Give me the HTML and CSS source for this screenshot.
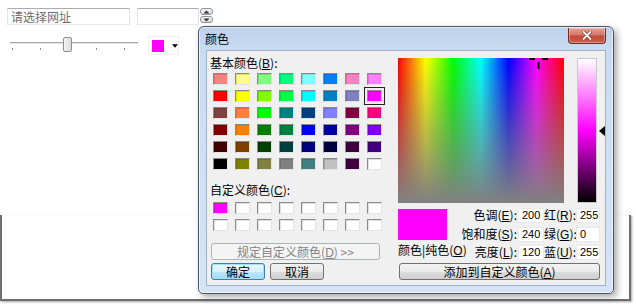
FILE: index.html
```html
<!DOCTYPE html>
<html>
<head>
<meta charset="utf-8">
<link rel="stylesheet" href="styles.css">
</head>
<body>
<div class="page">
  <div class="row1">
    <div class="textbox url">请选择网址</div>
    <div class="textbox num"></div>
    <div class="spin">
      <span><svg width="7" height="4" viewBox="0 0 7 4"><path d="M0.5 3.5 L3.5 0.5 L6.5 3.5Z" fill="#333"/></svg></span>
      <span><svg width="7" height="4" viewBox="0 0 7 4"><path d="M0.5 0.5 L3.5 3.5 L6.5 0.5Z" fill="#333"/></svg></span>
    </div>
  </div>
  <div class="row2">
    <div class="slider">
      <div class="track"></div>
      <div class="ticks"><i></i><i></i><i></i><i></i><i></i></div>
      <div class="thumb"></div>
    </div>
    <div class="colorbtn">
      <span class="cswatch"></span>
      <svg class="carrow" width="7" height="4" viewBox="0 0 7 4"><path d="M0 0 L7 0 L3.5 4Z" fill="#000"/></svg>
    </div>
  </div>
</div>

<div class="bgwin"></div>

<div class="dialog">
  <div class="titlebar">
    <span class="title">颜色</span>
    <div class="close">
      <svg width="10" height="9" viewBox="0 0 10 9"><path d="M1.5 1 L8.5 8 M8.5 1 L1.5 8" stroke="#7a2418" stroke-width="3" stroke-linecap="round"/><path d="M1.5 1 L8.5 8 M8.5 1 L1.5 8" stroke="#fff" stroke-width="1.8" stroke-linecap="round"/></svg>
    </div>
  </div>
  <div class="client">
    <div class="leftcol">
      <div class="lbl">基本颜色(<u>B</u>):</div>
      <div class="swgrid">
        <span class="sw" style="background:#ff8080"></span><span class="sw" style="background:#ffff80"></span><span class="sw" style="background:#80ff80"></span><span class="sw" style="background:#00ff80"></span><span class="sw" style="background:#80ffff"></span><span class="sw" style="background:#0080ff"></span><span class="sw" style="background:#ff80c0"></span><span class="sw" style="background:#ff80ff"></span>
        <span class="sw" style="background:#ff0000"></span><span class="sw" style="background:#ffff00"></span><span class="sw" style="background:#80ff00"></span><span class="sw" style="background:#00ff40"></span><span class="sw" style="background:#00ffff"></span><span class="sw" style="background:#0080c0"></span><span class="sw" style="background:#8080c0"></span><span class="sw selected" style="background:#ff00ff"></span>
        <span class="sw" style="background:#804040"></span><span class="sw" style="background:#ff8040"></span><span class="sw" style="background:#00ff00"></span><span class="sw" style="background:#008080"></span><span class="sw" style="background:#004080"></span><span class="sw" style="background:#8080ff"></span><span class="sw" style="background:#800040"></span><span class="sw" style="background:#ff0080"></span>
        <span class="sw" style="background:#800000"></span><span class="sw" style="background:#ff8000"></span><span class="sw" style="background:#008000"></span><span class="sw" style="background:#008040"></span><span class="sw" style="background:#0000ff"></span><span class="sw" style="background:#0000a0"></span><span class="sw" style="background:#800080"></span><span class="sw" style="background:#8000ff"></span>
        <span class="sw" style="background:#400000"></span><span class="sw" style="background:#804000"></span><span class="sw" style="background:#004000"></span><span class="sw" style="background:#004040"></span><span class="sw" style="background:#000080"></span><span class="sw" style="background:#000040"></span><span class="sw" style="background:#400040"></span><span class="sw" style="background:#400080"></span>
        <span class="sw" style="background:#000000"></span><span class="sw" style="background:#808000"></span><span class="sw" style="background:#808040"></span><span class="sw" style="background:#808080"></span><span class="sw" style="background:#408080"></span><span class="sw" style="background:#c0c0c0"></span><span class="sw" style="background:#400040"></span><span class="sw" style="background:#ffffff"></span>
      </div>
      <div class="lbl custom-lbl">自定义颜色(<u>C</u>):</div>
      <div class="swgrid custom">
        <span class="sw" style="background:#ff00ff"></span><span class="sw"></span><span class="sw"></span><span class="sw"></span><span class="sw"></span><span class="sw"></span><span class="sw"></span><span class="sw"></span>
        <span class="sw"></span><span class="sw"></span><span class="sw"></span><span class="sw"></span><span class="sw"></span><span class="sw"></span><span class="sw"></span><span class="sw"></span>
      </div>
      <div class="btn disabled wide">规定自定义颜色(<u>D</u>) &gt;&gt;</div>
      <div class="btnrow">
        <div class="btn default">确定</div>
        <div class="btn">取消</div>
      </div>
    </div>
    <div class="rightcol">
      <div class="pickrow">
        <div class="spectrum">
          <svg class="cross" width="21" height="21" viewBox="0 0 21 21"><path d="M1 10 H7 M14 10 H20 M10.5 1 V7 M10.5 13 V20" stroke="#000" stroke-width="2"/></svg>
        </div>
        <div class="lum"></div>
        <svg class="lumarrow" width="6" height="10" viewBox="0 0 6 10"><path d="M6 0 L0 5 L6 10Z" fill="#000"/></svg>
      </div>
      <div class="values">
        <div class="preview"></div>
        <div class="solid">颜色|纯色(<u>O</u>)</div>
        <div class="vl r1 c2">色调(<u>E</u>):</div>
        <div class="vbox r1 c3">200</div>
        <div class="vl r1 c4">红(<u>R</u>):</div>
        <div class="vbox r1 c5">255</div>
        <div class="vl r2 c2">饱和度(<u>S</u>):</div>
        <div class="vbox r2 c3">240</div>
        <div class="vl r2 c4">绿(<u>G</u>):</div>
        <div class="vbox r2 c5">0</div>
        <div class="vl r3 c2">亮度(<u>L</u>):</div>
        <div class="vbox r3 c3">120</div>
        <div class="vl r3 c4">蓝(<u>U</u>):</div>
        <div class="vbox r3 c5">255</div>
      </div>
      <div class="btn addbtn">添加到自定义颜色(<u>A</u>)</div>
    </div>
  </div>
</div>
</body>
</html>
```

FILE: styles.css
```css
* { box-sizing: border-box; }
html, body { margin: 0; padding: 0; background: #fff; }
body {
  width: 636px; height: 306px; overflow: hidden; position: relative;
  font-family: "Liberation Sans", "Noto Sans CJK SC", sans-serif;
  font-size: 12px; color: #000;
}
u { text-decoration: underline; text-underline-offset: 1px; }

.page { padding: 8px 0 0 7px; }
.row1 { display: flex; align-items: flex-start; height: 17px; }
.textbox {
  height: 17px; background: #fff;
  border: 1px solid; border-color: #abadb3 #dbdfe6 #e3e9ef #e2e3ea;
}
.url { width: 123px; padding-left: 3px; color: #6d6d6d; line-height: 15px; font-family: "Noto Sans CJK SC", sans-serif; }
.num { width: 62px; margin-left: 7px; }
.spin { margin-left: 1px; width: 13px; height: 15px; display: flex; flex-direction: column; gap: 1px; }
.spin span {
  flex: 1; border: 1px solid #8e9398; border-radius: 3px;
  background: linear-gradient(#f6f6f6, #dadada);
  display: flex; align-items: center; justify-content: center;
}

.row2 { display: flex; align-items: flex-start; margin-top: 11px; height: 19px; }
.slider { position: relative; margin-left: 3px; width: 128px; height: 19px; }
.track { margin-top: 6px; height: 2px; border-top: 1px solid #a8a8a8; border-bottom: 1px solid #e6e6e6; }
.ticks { display: flex; justify-content: space-between; margin-top: 4px; padding: 0 13px 0 2px; }
.ticks i { display: block; width: 1px; height: 2px; background: #8a8a8a; }
.thumb {
  position: absolute; left: 53px; top: 1px; width: 9px; height: 15px;
  border: 1px solid #8b9096; border-radius: 2px;
  background: linear-gradient(to right, #f4f4f4, #dcdcdc);
}
.colorbtn {
  margin-left: 10px; width: 31px; height: 19px;
  border: 1px solid #eeeeee; display: flex; align-items: center; padding-left: 3px;
}
.cswatch { width: 14px; height: 12px; background: #ff00ff; }
.carrow { margin-left: 8px; }

.bgwin {
  position: absolute; left: 0; top: 215px; width: 631px; height: 86px;
  border: 2px solid #6e6e6e; border-top: none;
  box-shadow: 1px 1px 2px rgba(0,0,0,0.35);
}

.dialog {
  position: absolute; left: 198px; top: 26px; width: 416px; height: 268px;
  border: 1px solid #4b5663; border-radius: 6px 6px 5px 5px;
  background: linear-gradient(to bottom, #bcd1eb 0, #cadcf1 24px, #d5e4f6 100%);
  box-shadow: inset 0 0 0 1px rgba(255,255,255,0.55), 3px 3px 7px rgba(0,0,0,0.35);
}
.titlebar { display: flex; justify-content: space-between; align-items: flex-start; height: 23px; padding: 0 7px 0 6px; }
.title { line-height: 23px; font-family: "Noto Sans CJK SC", sans-serif; }
.close {
  margin-top: 1px; width: 38px; height: 16px;
  border: 1px solid #6d2a22; border-top: none; border-radius: 0 0 4px 4px;
  background: linear-gradient(to bottom, #e4a193 0, #d6776a 45%, #c24b36 55%, #c9604b 100%);
  box-shadow: inset 0 0 0 1px rgba(255,255,255,0.35);
  display: flex; align-items: center; justify-content: center;
}
.client {
  margin: 0 7px; width: 400px; height: 236px;
  border: 1px solid #9fb2c8; background: #f0f0f0;
  display: flex;
}
.leftcol { width: 191px; padding: 5px 0 0 3px; }
.lbl { line-height: 14px; height: 14px; font-family: "Noto Sans CJK SC", sans-serif; }
.lbl u, .vl u, .solid u, .btn u { font-family: "Liberation Sans", sans-serif; }
.swgrid {
  display: grid; grid-template-columns: repeat(8, 15px); grid-auto-rows: 12px;
  column-gap: 7px; row-gap: 5px; margin: 3px 0 0 3px;
}
.sw {
  display: block; background: #fff;
  border: 1px solid; border-color: #8a8a8a #e4e4e4 #e4e4e4 #8a8a8a;
  box-shadow: inset 1px 1px 0 rgba(0,0,0,0.12);
}
.sw.selected { outline: 1px solid #222; outline-offset: 2px; }
.custom-lbl { margin-top: 13px; }
.swgrid.custom { margin-top: 5px; }

.btn {
  height: 17px; line-height: 15px; text-align: center;
  border: 1px solid #707070; border-radius: 3px;
  background: linear-gradient(to bottom, #f2f2f2 0, #ebebeb 50%, #dddddd 51%, #cfcfcf 100%);
  font-family: "Noto Sans CJK SC", sans-serif;
}
.btn.wide { margin: 12px 0 0 1px; width: 169px; }
.btn.disabled { border-color: #adb2b5; background: #f4f4f4; color: #838383; }
.btnrow { display: flex; gap: 5px; margin: 3px 0 0 1px; }
.btnrow .btn { width: 54px; }
.btn.default {
  border-color: #3c7fb1;
  background: linear-gradient(to bottom, #eaf6fd 0, #d9f0fc 50%, #bee6fd 51%, #a7d9f5 100%);
  box-shadow: inset 0 0 0 1px #9fe3fb;
}

.rightcol { width: 207px; padding-top: 7px; }
.pickrow { display: flex; height: 145px; }
.spectrum {
  position: relative; overflow: hidden; width: 168px; height: 145px;
  background:
    linear-gradient(to bottom, rgba(128,128,128,0), #808080),
    linear-gradient(to right, #ff0000, #ffff00, #00ff00, #00ffff, #0000ff, #ff00ff, #ff0000);
}
.cross { position: absolute; left: 130px; top: -9px; }
.lum {
  margin-left: 13px; width: 20px; height: 145px;
  border: 1px solid #c9c9c9;
  background: linear-gradient(to bottom, #ffffff, #ff00ff 50%, #000000);
}
.lumarrow { align-self: center; margin-left: 2px; }

.values {
  display: grid; margin-top: 3px;
  grid-template-columns: 62px 58px 26px 32px 24px;
  grid-template-rows: 19px 18px 18px;
}
.preview { grid-row: 1 / 3; grid-column: 1; margin-top: 3px; width: 49px; height: 31px; background: #ff00ff; }
.solid { grid-row: 3; grid-column: 1; align-self: start; line-height: 14px; white-space: nowrap; font-family: "Noto Sans CJK SC", sans-serif; }
.vl { text-align: right; line-height: 18px; white-space: nowrap; font-family: "Noto Sans CJK SC", sans-serif; }
.c2 { grid-column: 2; padding-right: 1px; }
.c4 { grid-column: 4; padding-right: 2px; }
.c3 { grid-column: 3; }
.c5 { grid-column: 5; }
.r1 { grid-row: 1; }
.r2 { grid-row: 2; }
.r3 { grid-row: 3; }
.vbox {
  align-self: center; height: 15px; line-height: 13px; padding-left: 3px;
  background: #fff; border: 1px solid #e9e9e9; font-size: 11px;
}
.addbtn { margin: 2px 0 0 1px; width: 201px; }
```
